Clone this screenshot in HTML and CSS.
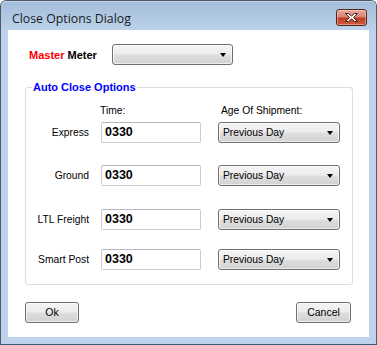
FILE: index.html
```html
<!DOCTYPE html>
<html>
<head>
<meta charset="utf-8">
<link rel="stylesheet" href="styles.css">
</head>
<body>
<div class="window">
  <div class="titlebar">
    <span class="title">Close Options Dialog</span>
    <div class="close">
      <svg width="17" height="11" viewBox="0 0 17 11"><path d="M2.5 1.5 L5.5 1.5 L8.5 4 L11.5 1.5 L14.5 1.5 L10.5 5.5 L14.5 9.5 L11.5 9.5 L8.5 7 L5.5 9.5 L2.5 9.5 L6.5 5.5 Z" fill="#ffffff" stroke="#4a1d16" stroke-width="1" stroke-linejoin="round"/></svg>
    </div>
  </div>
  <div class="client">
    <div class="master-row">
      <span class="master-label"><span class="red">Master</span> Meter</span>
      <div class="combo master-combo"><span class="combo-text"></span><i class="arrow"></i></div>
    </div>
    <fieldset class="group">
      <legend>Auto Close Options</legend>
      <div class="headers">
        <span class="hdr-time">Time:</span>
        <span class="hdr-age">Age Of Shipment:</span>
      </div>
      <div class="row">
        <span class="lbl">Express</span>
        <div class="tbox">0330</div>
        <div class="combo age"><span class="combo-text">Previous Day</span><i class="arrow"></i></div>
      </div>
      <div class="row">
        <span class="lbl">Ground</span>
        <div class="tbox">0330</div>
        <div class="combo age"><span class="combo-text">Previous Day</span><i class="arrow"></i></div>
      </div>
      <div class="row third">
        <span class="lbl">LTL Freight</span>
        <div class="tbox">0330</div>
        <div class="combo age"><span class="combo-text">Previous Day</span><i class="arrow"></i></div>
      </div>
      <div class="row last">
        <span class="lbl">Smart Post</span>
        <div class="tbox">0330</div>
        <div class="combo age"><span class="combo-text">Previous Day</span><i class="arrow"></i></div>
      </div>
    </fieldset>
    <div class="buttons">
      <div class="btn ok">Ok</div>
      <div class="btn cancel">Cancel</div>
    </div>
  </div>
</div>
</body>
</html>
```

FILE: styles.css
```css
html, body {
  margin: 0;
  padding: 0;
  background: #ffffff;
}

.window {
  box-sizing: border-box;
  width: 377px;
  height: 345px;
  border: 1px solid #4f5b66;
  border-bottom-color: #2f5d70;
  border-radius: 6px 6px 0 0;
  background: #bed3eb;
  display: flex;
  flex-direction: column;
  font-family: "Liberation Sans", Arial, sans-serif;
  font-size: 10.3px;
  color: #000;
}

.titlebar {
  height: 29px;
  flex: none;
  display: flex;
  justify-content: space-between;
  align-items: flex-start;
  background: linear-gradient(#a3bcd9, #bcd2ea);
  border-radius: 5px 5px 0 0;
  box-shadow: inset 0 1px 0 rgba(255,255,255,0.35);
}

.title {
  font-family: "Open Sans", "Noto Sans", sans-serif;
  font-size: 12.3px;
  line-height: 16px;
  margin: 10px 0 0 11px;
  color: #1a1a1a;
}

.close {
  box-sizing: border-box;
  width: 31px;
  height: 17px;
  margin: 8px 9px 0 0;
  border: 1px solid #5b2419;
  border-radius: 3px;
  background: linear-gradient(#e9aa9c 0%, #d98473 45%, #c23c25 55%, #cc5f44 100%);
  box-shadow: inset 0 0 0 1px rgba(255,255,255,0.35);
  display: flex;
  align-items: center;
  justify-content: center;
}

.client {
  box-sizing: border-box;
  width: 361px;
  height: 307px;
  margin: 0 7px 7px 7px;
  background: #ffffff;
  display: flex;
  flex-direction: column;
}

.master-row {
  display: flex;
  align-items: center;
  padding: 14px 0 0 21px;
}

.master-label {
  width: 83px;
  font-size: 11px;
  font-weight: bold;
  color: #000;
}

.red {
  color: #ff0000;
}

.combo {
  box-sizing: border-box;
  height: 21px;
  border: 1px solid #707070;
  border-radius: 3px;
  background: linear-gradient(#f4f4f4 0%, #ececec 48%, #dedede 52%, #d2d2d2 100%);
  box-shadow: inset 0 0 0 1px rgba(255,255,255,0.6);
  display: flex;
  align-items: center;
  justify-content: space-between;
  padding: 0 6px 0 4px;
}

.master-combo {
  width: 121px;
}

.combo-text {
  font-size: 10.3px;
  color: #000;
}

.arrow {
  width: 0;
  height: 0;
  border-left: 3.5px solid transparent;
  border-right: 3.5px solid transparent;
  border-top: 4px solid #000;
}

.group {
  box-sizing: border-box;
  width: 328px;
  margin: 16px 0 0 17px;
  padding: 10px 0 14px 0;
  border: 1px solid #d5dfe5;
  border-radius: 3px;
}

.group legend {
  font-size: 11px;
  font-weight: bold;
  color: #0000ff;
  line-height: 13px;
  padding: 0 1px;
  margin-left: 6px;
}

.headers {
  display: flex;
  line-height: 13px;
  padding-left: 74px;
}

.hdr-time {
  width: 121px;
}

.row {
  display: flex;
  align-items: center;
  height: 21px;
  margin-top: 22px;
}

.headers + .row {
  margin-top: 5px;
}

.row.third {
  margin-top: 23px;
}

.row.last {
  margin-top: 19px;
}

.lbl {
  box-sizing: border-box;
  width: 75px;
  padding-right: 12px;
  text-align: right;
}

.tbox {
  box-sizing: border-box;
  width: 100px;
  height: 21px;
  border: 1px solid #c9ccd2;
  border-top-color: #b5b8bf;
  border-radius: 2px;
  background: #fff;
  font-size: 12.5px;
  font-weight: bold;
  line-height: 19px;
  padding-left: 3px;
}

.age {
  width: 122px;
  margin-left: 17px;
}

.buttons {
  display: flex;
  justify-content: space-between;
  margin: 17px 18px 0 17px;
}

.btn {
  box-sizing: border-box;
  height: 21px;
  border: 1px solid #707070;
  border-radius: 3px;
  background: linear-gradient(#f4f4f4 0%, #ececec 48%, #dedede 52%, #d2d2d2 100%);
  box-shadow: inset 0 0 0 1px rgba(255,255,255,0.6);
  text-align: center;
  line-height: 19px;
  font-size: 10.5px;
}

.ok {
  width: 54px;
}

.cancel {
  width: 55px;
}
```
